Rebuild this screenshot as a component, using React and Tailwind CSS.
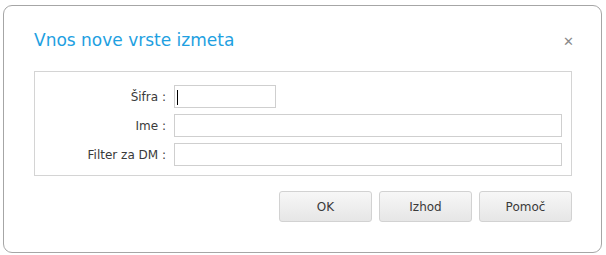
import React from "react";

const Field = ({ label, width, caret }) => {
  return (
    <div className="flex items-center h-[23px]">
      <span className="w-[139px] text-right pr-[8px] text-[12px] text-[#3a3a3a]">{label}</span>
      <div className={`relative h-[23px] border border-[#cfcfcf] bg-white ${width}`}>
        {caret && <span className="absolute left-[2px] top-[4px] w-px h-[15px] bg-black"></span>}
      </div>
    </div>
  );
};

const Btn = ({ children }) => {
  return (
    <button className="w-[93px] h-[31px] rounded-[3px] border border-[#d2d2d2] bg-gradient-to-b from-[#f7f7f7] to-[#e6e6e6] text-[12px] text-[#3a3a3a]">
      {children}
    </button>
  );
};

export default function App() {
  return (
    <div className="w-[606px] h-[255px] bg-white pt-[5px] pl-[3px] font-['DejaVu_Sans',sans-serif]">
      <div className="relative w-[599px] h-[248px] border border-[#a6a6a6] rounded-[9px] bg-white">
        <div className="pl-[30px] pt-[24px] h-[65px]">
          <h1 className="text-[17px] leading-[20px] text-[#1ea0e1]">Vnos nove vrste izmeta</h1>
        </div>
        <button className="absolute right-[27px] top-[29px] text-[#8a8a8a] text-[13px] leading-none">✕</button>
        <div className="ml-[30px] w-[538px] h-[105px] border border-[#d4d4d4] pt-[13px] flex flex-col gap-[6px]">
          <Field label="Šifra :" width="w-[102px]" caret />
          <Field label="Ime :" width="w-[388px]" />
          <Field label="Filter za DM :" width="w-[388px]" />
        </div>
        <div className="flex justify-end gap-[7px] mt-[15px] w-[568px]">
          <Btn>OK</Btn>
          <Btn>Izhod</Btn>
          <Btn>Pomoč</Btn>
        </div>
      </div>
    </div>
  );
}
